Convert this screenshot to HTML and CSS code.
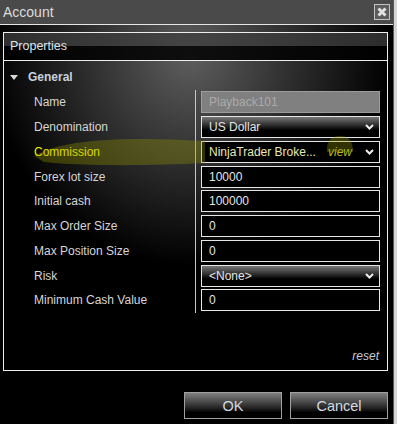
FILE: index.html
```html
<!DOCTYPE html>
<html lang="en">
<head>
  <meta charset="UTF-8" />
  <title>Account</title>
  <link rel="stylesheet" href="styles.css">
</head>
<body>
  <div class="window">
    <div class="titlebar">
      <span class="title">Account</span>
      <span class="close">
        <svg width="10" height="10" viewBox="0 0 10 10"><path d="M1.5 1.5 L8.5 8.5 M8.5 1.5 L1.5 8.5" stroke="#e2e2e2" stroke-width="3"/></svg>
      </span>
    </div>

    <div class="content">
      <div class="panel">
        <div class="panel-header">Properties</div>
        <div class="group"><span class="caret"></span>General</div>

        <div class="props">
          <div class="label">Name</div>
          <div class="value"><div class="field disabled">Playback101</div></div>

          <div class="label">Denomination</div>
          <div class="value"><div class="field select"><span>US Dollar</span><svg class="chev" width="9" height="6" viewBox="0 0 9 6"><path d="M1 1 L4.5 4.5 L8 1" fill="none" stroke="#eee" stroke-width="2"/></svg></div></div>

          <div class="label highlight">Commission</div>
          <div class="value"><div class="field"><span class="yellowish">NinjaTrader Broke...</span><span class="view">view</span><svg class="chev" width="9" height="6" viewBox="0 0 9 6"><path d="M1 1 L4.5 4.5 L8 1" fill="none" stroke="#eee" stroke-width="2"/></svg></div></div>

          <div class="label">Forex lot size</div>
          <div class="value"><div class="field">10000</div></div>

          <div class="label">Initial cash</div>
          <div class="value"><div class="field">100000</div></div>

          <div class="label">Max Order Size</div>
          <div class="value"><div class="field">0</div></div>

          <div class="label">Max Position Size</div>
          <div class="value"><div class="field">0</div></div>

          <div class="label">Risk</div>
          <div class="value"><div class="field select"><span>&lt;None&gt;</span><svg class="chev" width="9" height="6" viewBox="0 0 9 6"><path d="M1 1 L4.5 4.5 L8 1" fill="none" stroke="#eee" stroke-width="2"/></svg></div></div>

          <div class="label">Minimum Cash Value</div>
          <div class="value"><div class="field">0</div></div>
        </div>

        <div class="reset">reset</div>
      </div>

      <div class="buttons">
        <button>OK</button>
        <button>Cancel</button>
      </div>
    </div>

    <!-- highlighter marks drawn over the screenshot -->
    <svg class="smear" width="393" height="424" viewBox="0 0 393 424">
      <g opacity="0.32" fill="#9c9c00">
        <path d="M34 156 C 60 140, 120 136, 205 141 L 205 163 C 150 166, 80 166, 44 162 Z"/>
        <path d="M327 152 C 326 140, 332 136, 340 136 C 348 136, 353 140, 353 152 Z"/>
      </g>
    </svg>
  </div>
</body>
</html>
```

FILE: styles.css
```css
body {
  margin: 0;
  background: #d6d6d6;
  font-family: "Liberation Sans", Arial, sans-serif;
}

.window {
  position: relative;
  width: 393px;
  height: 424px;
  border-right: 1px solid #5a5a5a;
  background: #060606;
  display: flex;
  flex-direction: column;
  overflow: hidden;
}

.titlebar {
  height: 24px;
  flex-shrink: 0;
  background: #4a4a4a;
  border-bottom: 1px solid #e6e6e6;
  display: flex;
  align-items: center;
  justify-content: space-between;
  padding: 0 3px;
}

.title {
  color: #dcdcdc;
  font-size: 14px;
}

.close {
  width: 14px;
  height: 14px;
  border: 1px solid #c4c4c4;
  background: #5c5c5c;
  display: flex;
  align-items: center;
  justify-content: center;
}

.content {
  flex: 1;
  padding: 7px 5px 0 3px;
  background: radial-gradient(ellipse 200px 210px at 190px 30px, #5e5e5e, #000 100%);
}

.panel {
  height: 339px;
  box-sizing: border-box;
  border: 1px solid #eeeeee;
  display: flex;
  flex-direction: column;
}

.panel-header {
  height: 27px;
  line-height: 27px;
  border-bottom: 1px solid #eeeeee;
  background: linear-gradient(rgba(60, 60, 60, 0.75) 0 50%, rgba(0, 0, 0, 0.85) 50%);
  color: #dde4ec;
  font-size: 12.5px;
  padding-left: 6px;
}

.group {
  height: 29px;
  box-sizing: border-box;
  padding: 3px 0 0 6px;
  display: flex;
  align-items: center;
  color: #c8d2de;
  font-size: 12px;
  font-weight: bold;
}

.caret {
  width: 0;
  height: 0;
  border-left: 4px solid transparent;
  border-right: 4px solid transparent;
  border-top: 5px solid #d8d8d8;
  margin-right: 10px;
}

.props {
  display: grid;
  grid-template-columns: 192px 1fr;
  grid-auto-rows: 24.75px;
  padding-bottom: 1px;
}

.label {
  border-right: 1px solid #c8c8c8;
  padding-left: 30px;
  color: #d6d6d6;
  font-size: 12px;
  display: flex;
  align-items: center;
}

.label.highlight {
  color: #f0f000;
}

.value {
  padding: 0 7px 0 5px;
  display: flex;
  align-items: center;
}

.field {
  width: 100%;
  height: 22px;
  box-sizing: border-box;
  border: 1px solid #e6e6e6;
  background: #000;
  color: #e4e4e4;
  font-size: 12px;
  padding: 0 5px 0 7px;
  display: flex;
  align-items: center;
}

.field.disabled {
  background: #808080;
  border-color: #9c9c9c;
  color: #ababab;
}

.field.select {
  justify-content: space-between;
  background: linear-gradient(#767676, #262626 45%, #000 65%);
}

.yellowish {
  color: #e8e8b4;
}

.view {
  margin-left: auto;
  margin-right: 13px;
  font-style: italic;
  color: #b6bc1c;
}

.reset {
  margin-top: auto;
  text-align: right;
  padding: 0 8px 7px 0;
  font-size: 12px;
  font-style: italic;
  color: #c4ccd6;
}

.buttons {
  display: flex;
  justify-content: flex-end;
  gap: 8px;
  padding-top: 21px;
}

button {
  width: 98px;
  height: 27px;
  border: 1px solid #a0a0a0;
  background: linear-gradient(#808080, #2c2c2c 55%, #000 78%);
  color: #d2dae2;
  font-family: "Liberation Sans", Arial, sans-serif;
  font-size: 14.5px;
  padding: 0;
}

.smear {
  position: absolute;
  top: 0;
  left: 0;
  pointer-events: none;
}
```
